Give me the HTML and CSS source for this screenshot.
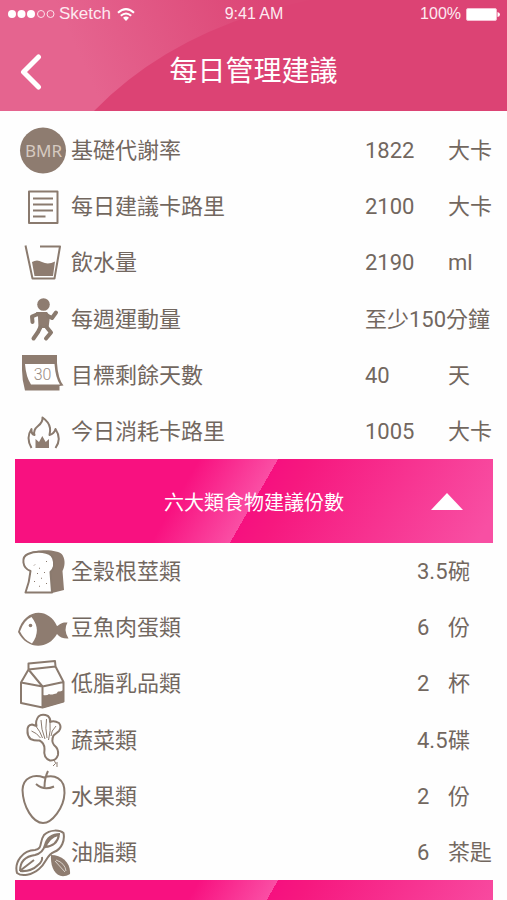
FILE: index.html
```html
<!DOCTYPE html>
<html lang="zh-Hant">
<head>
<meta charset="utf-8">
<meta name="viewport" content="width=device-width, initial-scale=1">
<title>每日管理建議</title>
<link rel="stylesheet" href="styles.css">
</head>
<body>
<div class="app">
  <header class="header">
    <svg class="header-art" viewBox="0 0 507 111" preserveAspectRatio="none" aria-hidden="true">
      <defs>
        <linearGradient id="glow" gradientUnits="userSpaceOnUse" x1="90" y1="80" x2="270" y2="0">
          <stop offset="0" stop-color="#e5648f"/>
          <stop offset="1" stop-color="#dc4575"/>
        </linearGradient>
      </defs>
      <path d="M0 0H310Q175 28 94 111H0Z" fill="url(#glow)"/>
    </svg>
    <div class="status">
      <div class="status-left">
        <svg width="47" height="10" viewBox="0 0 47 10" aria-hidden="true">
          <g fill="#fff"><circle cx="4" cy="5" r="4"/><circle cx="13.500" cy="5" r="4"/><circle cx="23" cy="5" r="4"/></g>
          <g fill="none" stroke="#fbe3ec"><circle cx="33" cy="5" r="3.500"/><circle cx="42.500" cy="5" r="3.500"/></g>
        </svg>
        <span class="carrier">Sketch</span>
        <svg width="18" height="13" viewBox="0 0 18 13" fill="none" stroke="#fff" stroke-width="2" aria-hidden="true">
          <path d="M1 4.800Q9-2.600 17 4.800M3.800 7.800Q9 3.200 14.200 7.800"/>
          <path d="M6 9.800Q9 7.200 12 9.800L9 13Z" fill="#fff" stroke="none"/>
        </svg>
      </div>
      <span>9:41 AM</span>
      <div class="status-right">
        <span>100%</span>
        <svg width="34" height="13" viewBox="0 0 34 13" aria-hidden="true">
          <rect x=".5" y=".5" width="30" height="12" rx="1.500" fill="#fff" stroke="#f6bfd2"/>
          <path d="M31.500 4Q34 4.500 34 6.500T31.500 9Z" fill="#fff"/>
        </svg>
      </div>
    </div>
    <div class="nav">
      <button class="back" type="button" aria-label="返回">
        <svg width="22" height="36" viewBox="0 0 22 36" fill="none" stroke="#fff" stroke-width="5" stroke-linecap="round" stroke-linejoin="round"><path d="M18.500 3L3.500 18L18.500 33"/></svg>
      </button>
      <h1>每日管理建議</h1>
    </div>
  </header>

  <main class="content">
    <table class="list daily">
      <colgroup><col class="col-icon"><col><col class="col-value"><col class="col-unit"></colgroup>
      <tr>
        <td><svg class="icon" viewBox="15 122 56 56" aria-hidden="true"><circle cx="43" cy="150.500" r="23" fill="#8e7c70"/><text class="bmr" x="43.500" y="157" text-anchor="middle">BMR</text></svg></td>
        <th scope="row">基礎代謝率</th><td>1822</td><td>大卡</td>
      </tr>
      <tr>
        <td><svg class="icon" viewBox="15 178 56 56" aria-hidden="true"><path class="line" d="M29 191.500H57.500V223H29ZM33 198.500H53M33 204.500H53M33 210.500H53M33 216.500H45.500"/></svg></td>
        <th scope="row">每日建議卡路里</th><td>2100</td><td>大卡</td>
      </tr>
      <tr>
        <td><svg class="icon" viewBox="15 234 56 56" aria-hidden="true"><path class="line" d="M25.500 245.500L32.500 278.500H54.500L60 246.500H40"/><path class="solid" d="M32 262Q37 259 42 262Q48 265 55 261.500L53 276H34.500Z"/></svg></td>
        <th scope="row">飲水量</th><td>2190</td><td>ml</td>
      </tr>
      <tr>
        <td><svg class="icon" viewBox="15 291 56 56" aria-hidden="true"><circle class="solid" cx="43.500" cy="304.500" r="6.300"/><path class="solid" d="M36 312H47L50 316L48.500 328H38.500L38 317Z"/><path class="limb" d="M38 314L32 316.500L32.500 322M48 316L52 318L56 312.500M40.500 327L38 332L33.500 338.500M46.500 327L51 332.500L46 338.500"/></svg></td>
        <th scope="row">每週運動量</th><td colspan="2">至少150分鐘</td>
      </tr>
      <tr>
        <td><svg class="icon" viewBox="15 347 56 56" aria-hidden="true"><path class="solid" d="M22 355H57V363Q58 379 63.500 385.500L59.500 386V390.500H25Q22 380 22 370Z"/><path fill="#fff" d="M25 364H54.500Q55.500 378 60 384.500H31Q26 377 25 364Z"/><text class="thirty" x="42.500" y="380" text-anchor="middle">30</text></svg></td>
        <th scope="row">目標剩餘天數</th><td>40</td><td>天</td>
      </tr>
      <tr>
        <td><svg class="icon" viewBox="15 402 56 56" aria-hidden="true"><path class="line" d="M31.500 447Q25.500 437 31.500 428Q31 433 34.500 434Q33 429 38 425Q43 421 42.500 416.500Q49 421 50 427Q50.500 430 49.500 434Q54 433 55.500 428Q62 438 55.500 447"/><path class="solid" d="M35.500 447V438L39 441L42.300 435L45.700 441L49 438V447Z"/></svg></td>
        <th scope="row">今日消耗卡路里</th><td>1005</td><td>大卡</td>
      </tr>
    </table>

    <button class="banner" type="button" aria-expanded="true">
      <span>六大類食物建議份數</span>
      <svg class="caret" width="32" height="17" viewBox="0 0 32 17" aria-hidden="true"><path d="M16 0L32 17H0Z" fill="#fff"/></svg>
    </button>

    <table class="list food">
      <colgroup><col class="col-icon"><col><col class="col-value"><col class="col-unit"></colgroup>
      <tr>
        <td><svg class="icon" viewBox="15 543 56 56" aria-hidden="true"><path class="solid" d="M28 554C36 549 58 549 62.500 555C66 561 64.500 567 62.500 571L64 590L52 593L46 570L44 555Z"/><path class="line loaf" d="M30.500 571C22 568 21 557 28 554C36 550.500 50 551 53 558C55.500 565 54 569 50.500 572L52 592.500H25.500Q29.500 582 30.500 571Z"/><path class="dots" d="M34 565.500l1-1M39 568l1 .5M46 562l1-1M37 574l1-1M44 572l1 1M34 582l1-1M41 578l1 .5M46 584l1-1M39 586l1 .5"/></svg></td>
        <th scope="row">全穀根莖類</th><td>3.5</td><td>碗</td>
      </tr>
      <tr>
        <td><svg class="icon" viewBox="15 599 56 56" aria-hidden="true"><path class="solid" d="M18 632C25 607 49 608 57 626C60 625 60 622 67.500 622.500Q63 630 68.500 638.500Q61 639 57 634C48 650 27 650 18 632Z"/><path fill="#fff" d="M20 631.500Q24 620 31.500 617Q42 630 32 643.500Q24 640 20 631.500Z"/><circle class="solid" cx="30.500" cy="625.500" r="1.800"/></svg></td>
        <th scope="row">豆魚肉蛋類</th><td>6</td><td>份</td>
      </tr>
      <tr>
        <td><svg class="icon" viewBox="15 655 56 56" aria-hidden="true"><path class="line" d="M28.500 663.500L55 661L55.500 666.500L28.500 669.500ZM28.500 669.500L21 682.500L42.500 686.500L63.500 682L55.500 666.500M28.500 669.500L42.500 686.500M21 682.500V703L42.500 707.500L63.500 701.500V682M42.500 686.500V707.500"/><path class="solid" d="M43 695Q47 696 49 694Q51 695 54 694Q57 694 58 691.500Q60 692 63.500 690V702L43 708Z"/></svg></td>
        <th scope="row">低脂乳品類</th><td>2</td><td>杯</td>
      </tr>
      <tr>
        <td><svg class="icon" viewBox="15 712 56 56" aria-hidden="true"><path class="line" d="M27.500 731Q27 725 32 724.500L36.500 726Q35 721 38.500 716.500Q42 713.500 48 716Q51 719 50 722Q54 720 59 723Q62 727 59 731L53.500 735.500Q51 741 54 745Q59 749 58 755Q56 761 50 760.500Q43 758 44.500 749Q44.500 743 39.500 740.500Q35 741 30.500 739Q27 735 27.500 731Z"/><path class="thin" d="M31.500 731Q37 733 40.500 738M36.500 727Q40 731 42.500 738M41 720Q41 729 45 739M46.500 719Q45 728 47 738M50 723Q51 730 48.500 740M56 726Q51 731 51 736M54 760L56 764M55 764L53 766M57 762V767"/></svg></td>
        <th scope="row">蔬菜類</th><td>4.5</td><td>碟</td>
      </tr>
      <tr>
        <td><svg class="icon" viewBox="15 768 56 56" aria-hidden="true"><path class="line" d="M44 777.500C34 774 23 777 22.500 790C23 807 33 823 43 823C52 823 64 808 64.500 793C65 778 54 774 44 777.500ZM36 784Q44 791 54 786.500M48 771Q44.500 778 44.500 787"/></svg></td>
        <th scope="row">水果類</th><td>2</td><td>份</td>
      </tr>
      <tr>
        <td><svg class="icon" viewBox="15 824 56 56" aria-hidden="true"><path class="line" d="M17 873C14 862 23 850 35 850C43 849 39 842 44 835C50 829 60 830 63.500 833C65 840 62 849 54 852C46 855 47 863 39 869C32 875 22 877 17 873Z"/><path class="line" d="M20 871Q20 857 35 855Q43 853 45 845Q48 834 60 834M42 857Q43 861 38 865Q31 872 20 871M21 870L34 860M45 847Q57 846 59 835M45 848Q49 837 58 835"/><path class="solid" d="M51 855C62 855 71 863 70 874C58 881 50 870 51 855Z"/><path d="M55 861L65 872M56 860Q65 863 66 871" fill="none" stroke="#d8d0c9"/></svg></td>
        <th scope="row">油脂類</th><td>6</td><td>茶匙</td>
      </tr>
    </table>

    <button class="banner" type="button" aria-label="展開更多"></button>
  </main>
</div>
</body>
</html>
```
FILE: styles.css
```css
* { box-sizing: border-box; }

body {
  margin: 0;
  background: #fefefe;
  color: #72675f;
  font-family: Roboto, "Noto Sans CJK TC", sans-serif;
}

button {
  border: 0;
  padding: 0;
  background: none;
  font-family: inherit;
  cursor: pointer;
}

svg { display: block; }

.app {
  height: 100vh;
  overflow: hidden;
}

.header {
  position: relative;
  background: #dc4374;
  color: #fff;
}

.header-art {
  position: absolute;
  inset: 0;
  width: 100%;
  height: 100%;
}

.status {
  position: relative;
  display: grid;
  grid-template-columns: 1fr auto 1fr;
  align-items: center;
  height: 28px;
  padding: 0 7px 0 8px;
  font: 16px "Liberation Sans", sans-serif;
  color: #fdeaf1;
}

.status-left,
.status-right {
  display: flex;
  align-items: center;
  gap: 5px;
}

.status-left { gap: 6px; }
.status-right { justify-content: flex-end; }
.carrier { font-size: 17px; margin-left: -2px; }

.nav {
  position: relative;
  display: grid;
  grid-template-columns: 48px 1fr 48px;
  align-items: center;
  height: 83px;
  padding-top: 4px;
}

.back { padding-left: 20px; }

h1 {
  margin: 0;
  font-size: 28px;
  font-weight: 400;
  line-height: 40px;
  text-align: center;
}

.content { padding: 11px 14px 0 15px; }

.list {
  width: 100%;
  height: 337px;
  table-layout: fixed;
  border-collapse: collapse;
  font-size: 22px;
  line-height: 30px;
}

.list td,
.list th {
  padding: 0;
  font-weight: 400;
  text-align: left;
  white-space: nowrap;
}

.list th,
.list th ~ td { padding-top: 2px; }

.col-icon { width: 56px; }
.col-unit { width: 45px; }
.daily .col-value { width: 83px; }
.food .col-value { width: 31px; }

.icon {
  width: 56px;
  height: 56px;
}

.solid { fill: #8e7c70; }

.line,
.limb,
.thin,
.dots {
  fill: none;
  stroke: #8a7a6e;
  stroke-width: 2;
  stroke-linejoin: round;
}

.loaf { fill: #fff; }

.thin,
.dots { stroke-width: 1; }

.limb {
  stroke-width: 4;
  stroke-linecap: round;
}

.bmr {
  fill: #d6cac0;
  font: 17px "Noto Sans", sans-serif;
}

.thirty {
  fill: #9a8c82;
  font: 300 16px Roboto, sans-serif;
}

.banner {
  position: relative;
  display: flex;
  align-items: center;
  justify-content: center;
  width: 100%;
  height: 84px;
  background: linear-gradient(120deg, #f81180 35%, #fa4ea4 50%, #f6107f 50%, #f6187f 56%, #f84fa3 97%);
  color: #fff;
  font-size: 20px;
}

.caret {
  position: absolute;
  right: 30px;
}
```
